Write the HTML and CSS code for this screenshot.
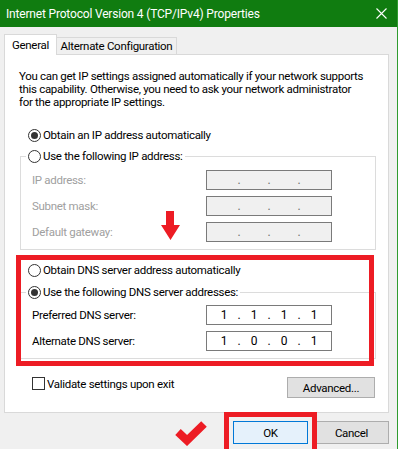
FILE: index.html
```html
<!DOCTYPE html>
<html>
<head>
<meta charset="utf-8">
<title>IPv4 Properties</title>
<link rel="stylesheet" href="styles.css">
</head>
<body>
<div class="window">
  <div class="titlebar">
    <span class="title">Internet Protocol Version 4 (TCP/IPv4) Properties</span>
    <svg class="close" width="11" height="11" viewBox="0 0 11 11"><path d="M0.5 0.5 L10.5 10.5 M10.5 0.5 L0.5 10.5" stroke="#fff" stroke-width="1.1" fill="none"/></svg>
  </div>
  <div class="tabs">
    <div class="tab active">General</div>
    <div class="tab">Alternate Configuration</div>
  </div>
  <div class="panel">
    <p class="intro">You can get IP settings assigned automatically if your network supports<br>this capability. Otherwise, you need to ask your network administrator<br>for the appropriate IP settings.</p>
    <div class="radio-row ip-auto"><span class="radio checked"></span><span>Obtain an IP address automatically</span></div>
    <div class="group ip-group">
      <div class="group-head"><span class="radio"></span><span>Use the following IP address:</span></div>
      <div class="field-row first disabled"><span class="label">IP address:</span>
        <span class="ipbox off"><span class="oct"></span><span class="dot">.</span><span class="oct"></span><span class="dot">.</span><span class="oct"></span><span class="dot">.</span><span class="oct"></span></span></div>
      <div class="field-row disabled"><span class="label">Subnet mask:</span>
        <span class="ipbox off"><span class="oct"></span><span class="dot">.</span><span class="oct"></span><span class="dot">.</span><span class="oct"></span><span class="dot">.</span><span class="oct"></span></span></div>
      <div class="field-row disabled"><span class="label">Default gateway:</span>
        <span class="ipbox off"><span class="oct"></span><span class="dot">.</span><span class="oct"></span><span class="dot">.</span><span class="oct"></span><span class="dot">.</span><span class="oct"></span></span></div>
    </div>
    <div class="radio-row dns-auto"><span class="radio"></span><span>Obtain DNS server address automatically</span></div>
    <div class="group dns-group">
      <div class="group-head"><span class="radio checked"></span><span>Use the following DNS server addresses:</span></div>
      <div class="field-row first"><span class="label">Preferred DNS server:</span>
        <span class="ipbox"><span class="oct">1</span><span class="dot">.</span><span class="oct">1</span><span class="dot">.</span><span class="oct">1</span><span class="dot">.</span><span class="oct">1</span></span></div>
      <div class="field-row"><span class="label">Alternate DNS server:</span>
        <span class="ipbox"><span class="oct">1</span><span class="dot">.</span><span class="oct">0</span><span class="dot">.</span><span class="oct">0</span><span class="dot">.</span><span class="oct">1</span></span></div>
    </div>
    <div class="bottom-row">
      <div class="check-row"><span class="checkbox"></span><span>Validate settings upon exit</span></div>
      <div class="btn adv">Advanced...</div>
    </div>
  </div>
  <div class="footer">
    <div class="btn ok">OK</div>
    <div class="btn cancel">Cancel</div>
  </div>
</div>
<div class="mark box-dns"></div>
<div class="mark box-ok"></div>
<svg class="arrow" width="20" height="30" viewBox="0 0 20 30"><polygon points="5,0 13,0 13,14 19,14 9.5,29 0,14 5,14" fill="#ed1c24"/></svg>
<svg class="tick" width="36" height="26" viewBox="0 0 36 26"><polyline points="4,12 13,20.5 30,4" fill="none" stroke="#ed1c24" stroke-width="8" stroke-linejoin="miter"/></svg>
</body>
</html>
```

FILE: styles.css
```css
* { box-sizing: border-box; }
html, body { margin: 0; padding: 0; }
body {
  width: 398px;
  height: 449px;
  overflow: hidden;
  position: relative;
  background: #f0f0f0;
  font-family: Roboto, "Liberation Sans", sans-serif;
  font-size: 11.5px;
  letter-spacing: -0.3px;
  color: #000;
  white-space: nowrap;
}
.window {
  width: 398px;
  height: 449px;
  border-right: 1px solid #2f9b2f;
}
.titlebar {
  height: 27px;
  background: #107c10;
  color: #fff;
  display: flex;
  align-items: center;
  justify-content: space-between;
  padding: 0 10px 0 6px;
}
.title { font-size: 12px; letter-spacing: -0.18px; }
.close { display: block; }

.tabs {
  display: flex;
  align-items: flex-start;
  height: 20px;
  margin-top: 7px;
  padding-left: 4px;
}
.tab {
  border: 1px solid #d9d9d9;
  border-bottom: none;
  background: #f0f0f0;
  margin-top: 3px;
  height: 17px;
  padding: 0 2px;
  display: flex;
  align-items: center;
  justify-content: center;
  width: 121px;
}
.tab.active {
  position: relative;
  z-index: 1;
  margin-top: 0;
  height: 21px;
  width: 53px;
  background: #fff;
  margin-right: -1px;
  padding-bottom: 1px;
}
.panel {
  margin-left: 4px;
  width: 385px;
  height: 359px;
  background: #fff;
  border: 1px solid #d9d9d9;
}
.intro {
  margin: 15px 0 0 14px;
  line-height: 13px;
}
.radio-row, .group-head, .check-row {
  display: flex;
  align-items: center;
  height: 14px;
}
.radio {
  width: 13px;
  height: 13px;
  border: 1px solid #333;
  border-radius: 50%;
  background: #fff;
  margin-right: 2px;
  display: flex;
  align-items: center;
  justify-content: center;
  flex: none;
}
.radio.checked::after {
  content: "";
  width: 7px;
  height: 7px;
  border-radius: 50%;
  background: #333;
}
.ip-auto { margin: 19px 0 0 23px; }
.group {
  margin-left: 15px;
  width: 356px;
  border: 1px solid #dcdcdc;
  padding-bottom: 7px;
}
.ip-group { margin-top: 14px; }
.group-head {
  margin: -8px 0 0 5px;
  padding: 0 2px;
  background: #fff;
  width: fit-content;
}
.field-row {
  display: flex;
  align-items: center;
  height: 20px;
  margin-top: 6px;
  padding-left: 11px;
}
.field-row.first { margin-top: 7px; }
.dns-group .field-row.first { margin-top: 6px; }
.field-row .label { width: 174px; }
.field-row.disabled .label { color: #a0a0a0; }
.ipbox {
  width: 126px;
  height: 20px;
  border: 1px solid #7a7a7a;
  background: #fff;
  display: flex;
  align-items: center;
  padding-left: 6px;
  letter-spacing: 0;
  font-size: 12px;
}
.ipbox.off { background: #f0f0f0; }
.oct { width: 22px; text-align: center; }
.dot { width: 8px; text-align: center; }
.ipbox.off .dot { color: #6d6d6d; }
.dns-auto { margin: 13px 0 0 23px; }
.dns-group { margin-top: 15px; }
.bottom-row {
  display: flex;
  justify-content: space-between;
  align-items: flex-start;
  margin: 18px 13px 0 27px;
}
.check-row { height: 13px; }
.checkbox {
  width: 13px;
  height: 13px;
  border: 1px solid #333;
  background: #fff;
  margin-right: 2px;
}
.btn {
  height: 23px;
  width: 75px;
  border: 1px solid #adadad;
  background: #e1e1e1;
  display: flex;
  align-items: center;
  justify-content: center;
}
.btn.adv { width: 88px; height: 21px; }
.footer {
  display: flex;
  justify-content: flex-end;
  gap: 6px;
  margin-top: 8px;
  padding-right: 8px;
}
.btn.ok {
  background: #e5f1fb;
  border-color: #0078d7;
}
.mark {
  position: absolute;
  border: 5px solid #ed1c24;
}
.box-dns { left: 16px; top: 255px; width: 358px; height: 111px; }
.box-ok { left: 224px; top: 412px; width: 93px; height: 45px; }
.arrow { position: absolute; left: 161px; top: 211px; }
.tick { position: absolute; left: 174px; top: 420px; }
```
